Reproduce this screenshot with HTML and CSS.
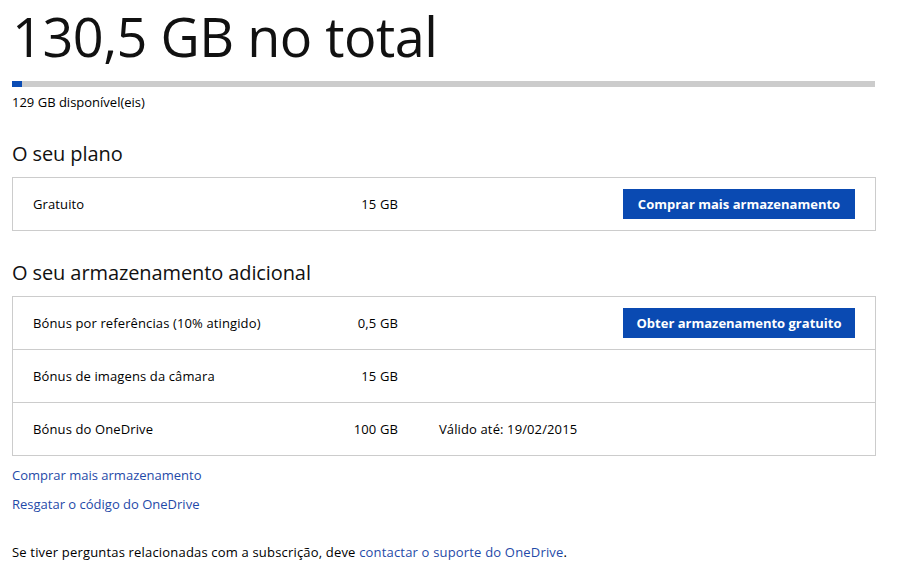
FILE: index.html
```html
<!DOCTYPE html>
<html lang="pt">
<head>
<meta charset="utf-8">
<link rel="stylesheet" href="styles.css">
</head>
<body>
<main class="page">
  <h1 class="total">130,5 GB no total</h1>
  <div class="bar"><div class="bar-fill" style="width:10px"></div></div>
  <p class="avail">129 GB disponível(eis)</p>

  <h2 class="section">O seu plano</h2>
  <div class="box">
    <div class="row">
      <span class="name">Gratuito</span>
      <span class="size">15 GB</span>
      <span class="extra"></span>
      <a class="btn">Comprar mais armazenamento</a>
    </div>
  </div>

  <h2 class="section">O seu armazenamento adicional</h2>
  <div class="box">
    <div class="row">
      <span class="name">Bónus por referências (10% atingido)</span>
      <span class="size">0,5 GB</span>
      <span class="extra"></span>
      <a class="btn">Obter armazenamento gratuito</a>
    </div>
    <div class="row">
      <span class="name">Bónus de imagens da câmara</span>
      <span class="size">15 GB</span>
      <span class="extra"></span>
    </div>
    <div class="row">
      <span class="name">Bónus do OneDrive</span>
      <span class="size">100 GB</span>
      <span class="extra">Válido até: 19/02/2015</span>
    </div>
  </div>

  <div class="links">
    <a class="link">Comprar mais armazenamento</a>
    <a class="link">Resgatar o código do OneDrive</a>
  </div>

  <p class="foot">Se tiver perguntas relacionadas com a subscrição, deve <a class="link-inline">contactar o suporte do OneDrive</a>.</p>
</main>
</body>
</html>
```
FILE: styles.css
```css
* { box-sizing: border-box; }
body {
  margin: 0;
  background: #fff;
  color: #000;
  font-family: "Open Sans", "Noto Sans", sans-serif;
  font-size: 13px;
}
.page {
  width: 864px;
  margin-left: 12px;
}
.total {
  margin: 0;
  font-weight: 400;
  font-size: 54px;
  line-height: 72px;
  letter-spacing: -0.5px;
  color: #111;
}
.bar {
  margin-top: 9px;
  height: 6px;
  width: 863px;
  background: #cccccc;
}
.bar-fill {
  height: 100%;
  background: #0b4cb4;
}
.avail {
  margin: 7px 0 0;
  line-height: 17px;
  font-size: 13px;
}
.section {
  margin: 29px 0 0;
  font-size: 20px;
  font-weight: 400;
  line-height: 28px;
  letter-spacing: -0.1px;
  color: #111;
}
.box {
  margin-top: 9px;
  border: 1px solid #cccccc;
}
.box + .section { margin-top: 28px; }
.row {
  display: flex;
  align-items: center;
  height: 53px;
  padding: 0 20px;
  border-top: 1px solid #cccccc;
  font-size: 13px;
  letter-spacing: 0.12px;
}
.row:first-child { border-top: none; height: 52px; }
.name { width: 297px; }
.size { width: 68px; text-align: right; }
.extra { flex: 1; padding-left: 41px; }
.btn {
  display: flex;
  align-items: center;
  justify-content: center;
  width: 232px;
  height: 30px;
  background: #0a4ab2;
  color: #fff;
  font-weight: 700;
  font-size: 13px;
  letter-spacing: 0;
}
.links {
  display: flex;
  flex-direction: column;
  gap: 11px;
  margin-top: 10px;
}
.link, .link-inline {
  color: #1f4aa8;
  text-decoration: none;
  line-height: 18px;
}
.foot {
  margin: 30px 0 0;
  line-height: 18px;
  letter-spacing: 0.18px;
}
```
